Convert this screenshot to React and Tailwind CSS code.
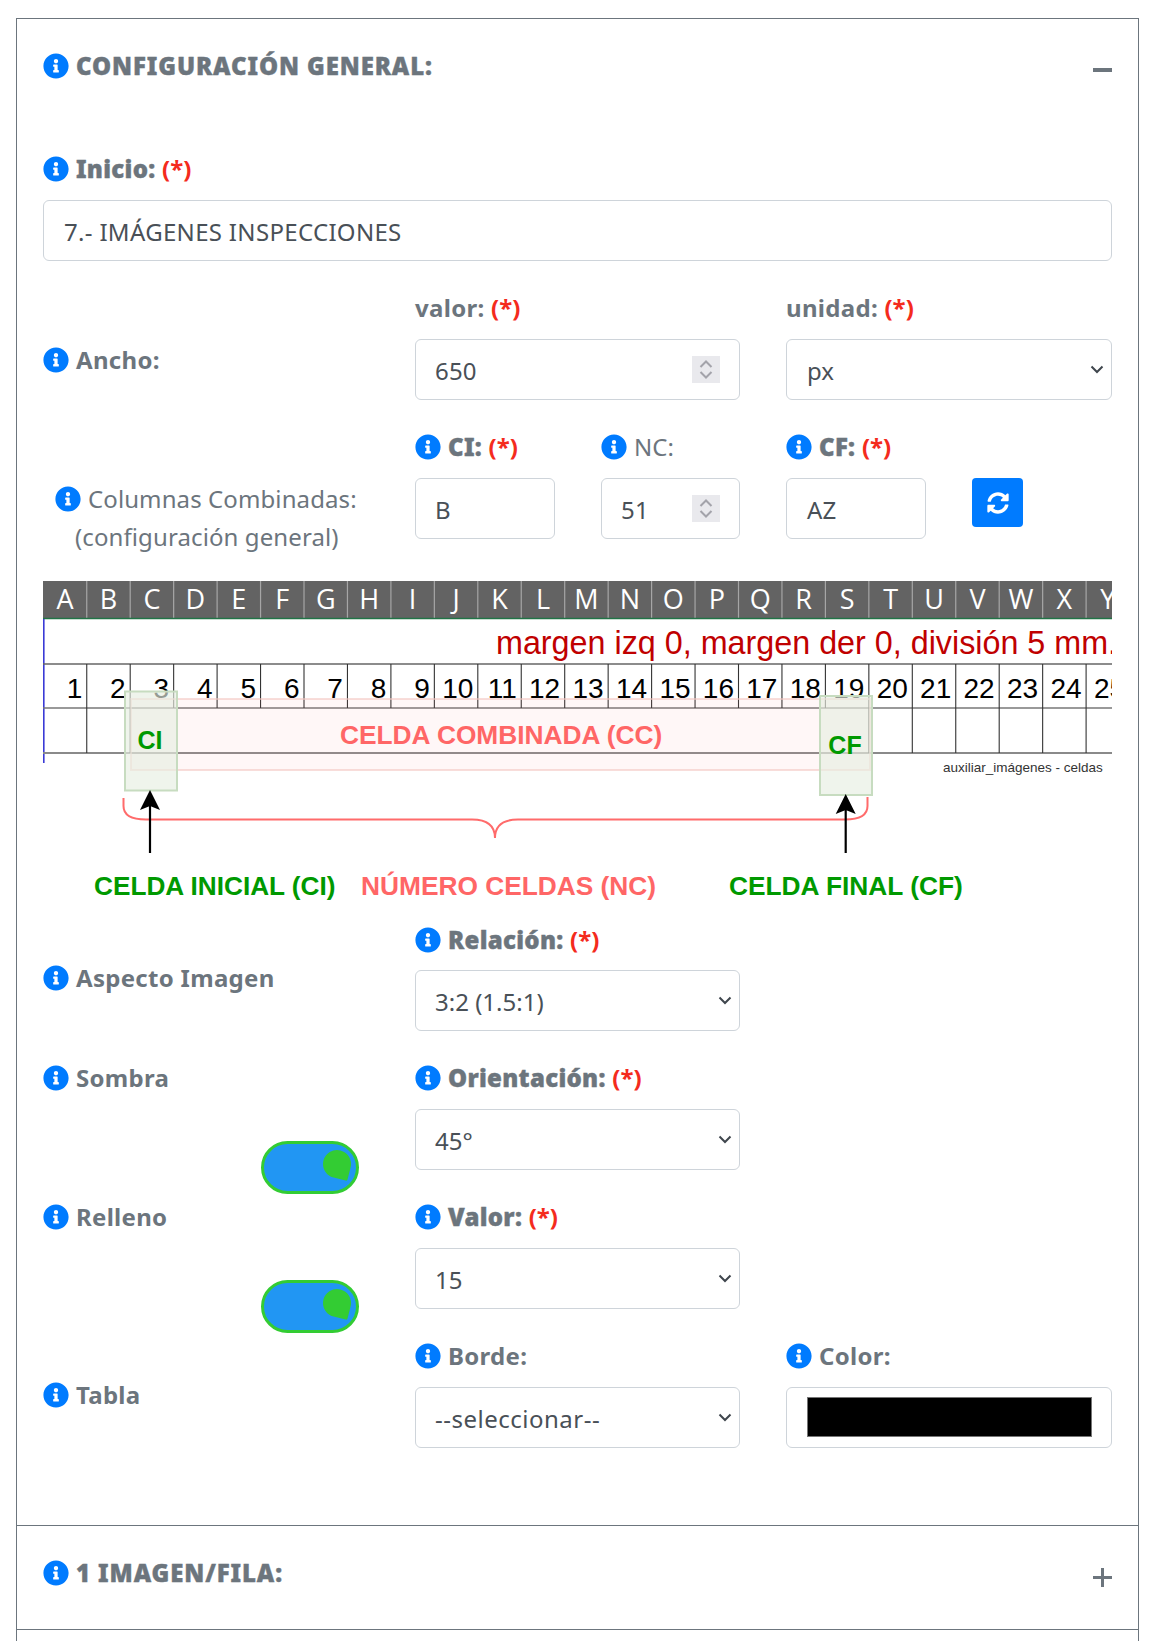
import { FaInfoCircle, FaSyncAlt } from 'react-icons/fa'

const letters = 'ABCDEFGHIJKLMNOPQRSTUVWXY'.split('')
const CELL = 43.45
const X0 = 43.3

function Info() {
  return <FaInfoCircle className="w-[26px] h-[26px] shrink-0 text-[#007bff]" />
}

function Req() {
  return <span className="text-[#f42b1d] font-bold tracking-normal [-webkit-text-stroke:0]">(*)</span>
}

function Label({ icon = true, req, thin, heavy, children, className = '' }) {
  const weight = heavy ? 'font-black tracking-[0.3px] [-webkit-text-stroke:0.4px_#6c757d]' : thin ? 'font-normal tracking-[0.1px]' : 'font-bold tracking-[0.3px]'
  return (
    <div className={`h-9 flex items-center gap-[7px] text-[#6c757d] whitespace-nowrap ${weight} ${className}`}>
      {icon && <Info />}
      <span>{children}{req && <> <Req /></>}</span>
    </div>
  )
}

function Chevron() {
  return (
    <svg width="14" height="9" viewBox="0 0 14 9" className="shrink-0">
      <polyline points="1.5,1.5 7,7 12.5,1.5" fill="none" stroke="#3f464d" strokeWidth="2" />
    </svg>
  )
}

function Spinner() {
  return (
    <div className="w-7 h-[27px] bg-[#e9e9ed] flex flex-col items-center justify-center gap-[3px] shrink-0">
      <svg width="14" height="8" viewBox="0 0 14 8"><polyline points="1.5,7 7,1.5 12.5,7" fill="none" stroke="#a3a3aa" strokeWidth="2" /></svg>
      <svg width="14" height="8" viewBox="0 0 14 8"><polyline points="1.5,1 7,6.5 12.5,1" fill="none" stroke="#a3a3aa" strokeWidth="2" /></svg>
    </div>
  )
}

function Box({ children, className = '' }) {
  return (
    <div className={`h-[61px] border border-[#ced4da] rounded-[6px] flex items-center text-[#495057] whitespace-nowrap bg-white ${className}`}>
      {children}
    </div>
  )
}

function Input({ value, className = 'pl-[19px]' }) {
  return <Box className={`tracking-[0.2px] ${className}`}><span className="mt-[3px]">{value}</span></Box>
}

function NumberInput({ value }) {
  return (
    <Box className="pl-[19px] pr-[19px] justify-between tracking-[0.2px]">
      <span className="mt-[3px]">{value}</span>
      <Spinner />
    </Box>
  )
}

function Select({ value, className = 'pl-[19px]' }) {
  return (
    <Box className={`pr-[7px] justify-between ${className}`}>
      <span className="mt-[3px]">{value}</span>
      <Chevron />
    </Box>
  )
}

function Toggle({ className = '' }) {
  return (
    <div className={`w-[98px] h-[53px] rounded-full border-[3px] border-[#33cc33] bg-[#2196f3] ml-auto mr-[10px] flex items-start justify-end pt-[6px] pr-[5px] ${className}`}>
      <div className="w-7 h-7 bg-[#33cc33] rounded-[50%_50%_6%_50%] rotate-[14deg]" />
    </div>
  )
}

function Row({ children, className = '' }) {
  return <div className={`grid grid-cols-[326px_325px_326px] gap-x-[46px] h-[110px] ${className}`}>{children}</div>
}

function SheetImage() {
  const rights = letters.map((_, i) => X0 + CELL * (i + 1))
  return (
    <svg viewBox="43 581 1069 340" className="w-[1069px] h-[340px] block mt-[42px]">
      <rect x="43" y="581" width="1069" height="37" fill="#636363" />
      {rights.map((x, i) => <line key={i} x1={x} x2={x} y1="581" y2="618" stroke="#a6a6a6" strokeWidth="1.2" />)}
      <line x1="43" x2="1112" y1="618.5" y2="618.5" stroke="#217346" strokeWidth="1.5" />
      {letters.map((l, i) => (
        <text key={l} x={X0 + CELL * (i + 0.5)} y="609" textAnchor="middle" fill="#fff" fontSize="27" fontFamily="'Open Sans', sans-serif">{l}</text>
      ))}

      <line x1="43.8" x2="43.8" y1="619" y2="763" stroke="#3a3ad6" strokeWidth="1.6" />
      <text x="496" y="654" fill="#c00000" fontSize="32.3" fontFamily="'Liberation Sans', sans-serif">margen izq 0, margen der 0, división 5 mm.</text>

      <line x1="43" x2="1112" y1="664" y2="664" stroke="#666" strokeWidth="1.4" />
      <line x1="43" x2="1112" y1="708" y2="708" stroke="#777" strokeWidth="1.4" />
      <line x1="43" x2="1112" y1="753" y2="753" stroke="#8a8a8a" strokeWidth="1.8" />
      {rights.map((x, i) => (
        <line key={i} x1={x} x2={x} y1="664" y2={i < 2 || i >= 18 ? 753 : 708} stroke="#333" strokeWidth="1.1" />
      ))}
      {letters.map((_, i) => (
        <text key={i} x={rights[i] - 4.5} y="698" textAnchor="end" fill="#000" fontSize="28" fontFamily="'Liberation Sans', sans-serif">{i + 1}</text>
      ))}

      <rect x="131" y="699" width="739" height="71" fill="#f88" fillOpacity="0.07" stroke="#f3c6c2" strokeOpacity="0.6" strokeWidth="2" />
      <rect x="125" y="691.5" width="52" height="99" fill="#e6eee2" fillOpacity="0.65" stroke="#c7dcc0" strokeWidth="2" />
      <rect x="820" y="696" width="52" height="99" fill="#e6eee2" fillOpacity="0.65" stroke="#c7dcc0" strokeWidth="2" />

      <text x="150" y="749" textAnchor="middle" fill="#009900" fontWeight="700" fontSize="25" fontFamily="'Liberation Sans', sans-serif">CI</text>
      <text x="845" y="754" textAnchor="middle" fill="#009900" fontWeight="700" fontSize="25" fontFamily="'Liberation Sans', sans-serif">CF</text>
      <text x="340" y="744" fill="#ff6666" fontWeight="700" fontSize="26.3" fontFamily="'Liberation Sans', sans-serif">CELDA COMBINADA (CC)</text>
      <text x="943" y="772" fill="#333" fontSize="13.5" fontFamily="'Liberation Sans', sans-serif">auxiliar_imágenes  - celdas</text>

      <path d="M123.5 798 V806 Q123.5 819.5 146 819.5 H472 Q495 819.5 495 838 Q495 819.5 518 819.5 H845 Q867.5 819.5 867.5 806 V797" fill="none" stroke="#ff6b6b" strokeWidth="2" />

      <line x1="150" x2="150" y1="853" y2="805" stroke="#000" strokeWidth="2.2" />
      <path d="M150 790 L160 810 L150 806 L140 810 Z" fill="#000" />
      <line x1="845.7" x2="845.7" y1="853" y2="809" stroke="#000" strokeWidth="2.2" />
      <path d="M845.7 794 L855.7 814 L845.7 810 L835.7 814 Z" fill="#000" />

      <text x="94" y="895" fill="#009900" fontWeight="700" fontSize="26.2" fontFamily="'Liberation Sans', sans-serif">CELDA INICIAL (CI)</text>
      <text x="361" y="895" fill="#ff6666" fontWeight="700" fontSize="26.3" fontFamily="'Liberation Sans', sans-serif">NÚMERO CELDAS (NC)</text>
      <text x="729" y="895" fill="#009900" fontWeight="700" fontSize="26.3" fontFamily="'Liberation Sans', sans-serif">CELDA FINAL (CF)</text>
    </svg>
  )
}

export default function App() {
  return (
    <div className="h-[1641px] overflow-hidden bg-white pt-[18px] pl-4 pr-[10px] text-[24px] font-['Noto_Sans',sans-serif]">
      <div className="border border-[#6c757d] h-[1700px]">
        {/* Configuracion general */}
        <section className="pl-[26px] pr-[26px] pb-[77px] border-b border-[#6c757d]">
          <div className="h-[92px] flex items-center justify-between">
            <Label heavy className="tracking-[0.9px] mt-[2px]">CONFIGURACIÓN GENERAL:</Label>
            <div className="w-[19px] h-1 bg-[#6c757d] mt-[9px]" />
          </div>

          <Label heavy req className="mt-[40px]">Inicio:</Label>
          <Input value="7.- IMÁGENES INSPECCIONES" className="mt-[13px] pl-[20px] tracking-[0.32px]" />

          <Row className="mt-[29px]">
            <Label className="mt-[52px]">Ancho:</Label>
            <div>
              <Label icon={false} req>valor:</Label>
              <div className="mt-[13px]"><NumberInput value="650" /></div>
            </div>
            <div>
              <Label icon={false} req>unidad:</Label>
              <div className="mt-[13px]"><Select value="px" className="pl-5" /></div>
            </div>
          </Row>

          <Row className="mt-[29px]">
            <div className="pl-3 pt-[52px] text-[#6c757d]">
              <Label thin>Columnas Combinadas:</Label>
              <div className="h-[38px] mt-px pl-5 flex items-center whitespace-nowrap tracking-[0.1px]">(configuración general)</div>
            </div>
            <div className="grid grid-cols-[140px_139px] gap-x-[46px]">
              <div>
                <Label heavy req>CI:</Label>
                <div className="mt-[13px]"><Input value="B" /></div>
              </div>
              <div>
                <Label thin>NC:</Label>
                <div className="mt-[13px]"><NumberInput value="51" /></div>
              </div>
            </div>
            <div className="grid grid-cols-[140px_51px] gap-x-[46px]">
              <div>
                <Label heavy req>CF:</Label>
                <div className="mt-[13px]"><Input value="AZ" className="pl-5" /></div>
              </div>
              <button className="mt-[49px] h-[49px] rounded-[4px] bg-[#007bff] flex items-center justify-center text-white">
                <FaSyncAlt className="w-[22px] h-[22px]" />
              </button>
            </div>
          </Row>

          <SheetImage />

          <Row>
            <Label className="mt-[39px]">Aspecto Imagen</Label>
            <div>
              <Label heavy req className="mt-px">Relación:</Label>
              <div className="mt-[12px]"><Select value="3:2 (1.5:1)" /></div>
            </div>
          </Row>

          <Row className="mt-[29px]">
            <div>
              <Label>Sombra</Label>
              <Toggle className="mt-[45px]" />
            </div>
            <div>
              <Label heavy req>Orientación:</Label>
              <div className="mt-[13px]"><Select value="45°" /></div>
            </div>
          </Row>

          <Row className="mt-[29px]">
            <div>
              <Label>Relleno</Label>
              <Toggle className="mt-[45px]" />
            </div>
            <div>
              <Label heavy req>Valor:</Label>
              <div className="mt-[13px]"><Select value="15" /></div>
            </div>
          </Row>

          <Row className="mt-[29px]">
            <Label className="mt-[39px]">Tabla</Label>
            <div>
              <Label>Borde:</Label>
              <div className="mt-[13px]"><Select value="--seleccionar--" className="pl-[19px] tracking-[0.5px]" /></div>
            </div>
            <div>
              <Label>Color:</Label>
              <Box className="mt-[13px] pl-[20px] pr-[19px]">
                <div className="w-full h-[40px] bg-black border border-[#767676] -mt-px" />
              </Box>
            </div>
          </Row>
        </section>

        {/* 1 imagen/fila */}
        <section className="pl-[26px] pr-[26px] pb-[11px] border-b border-[#6c757d]">
          <div className="h-[92px] flex items-center justify-between">
            <Label heavy className="tracking-[0.9px] mt-[2px]">1 IMAGEN/FILA:</Label>
            <div className="relative w-[19px] h-[19px] mt-[11px]">
              <div className="absolute left-0 right-0 top-2 h-[3px] bg-[#6c757d]" />
              <div className="absolute top-0 bottom-0 left-2 w-[3px] bg-[#6c757d]" />
            </div>
          </div>
        </section>
      </div>
    </div>
  )
}
